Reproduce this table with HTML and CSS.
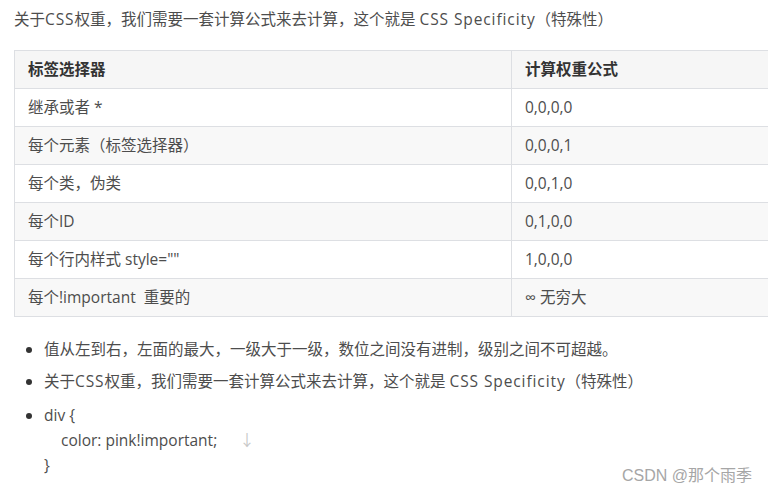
FILE: index.html
```html
<!DOCTYPE html>
<html lang="zh-CN">
<head>
<meta charset="utf-8">
<link rel="stylesheet" href="styles.css">
</head>
<body>
<div class="article">
  <p class="intro">关于<span class="lt">CSS</span>权重，我们需要一套计算公式来去计算，这个就是 <span class="lt">CSS Specificity</span>（特殊性）</p>
  <table class="spec">
    <thead>
      <tr><th class="c1">标签选择器</th><th>计算权重公式</th></tr>
    </thead>
    <tbody>
      <tr><td>继承或者 *</td><td>0,0,0,0</td></tr>
      <tr><td>每个元素（标签选择器）</td><td>0,0,0,1</td></tr>
      <tr><td>每个类，伪类</td><td>0,0,1,0</td></tr>
      <tr><td>每个ID</td><td>0,1,0,0</td></tr>
      <tr><td>每个行内样式 style=""</td><td>1,0,0,0</td></tr>
      <tr><td>每个!important&nbsp; 重要的</td><td>∞ 无穷大</td></tr>
    </tbody>
  </table>
  <ul class="notes">
    <li>值从左到右，左面的最大，一级大于一级，数位之间没有进制，级别之间不可超越。</li>
    <li>关于<span class="lt">CSS</span>权重，我们需要一套计算公式来去计算，这个就是 <span class="lt">CSS Specificity</span>（特殊性）</li>
    <li class="code">div {<br><span class="indent">color: pink!important;</span><span class="arrow">↓</span><br>}</li>
  </ul>
</div>
<div class="watermark">CSDN @那个雨季</div>
</body>
</html>
```

FILE: styles.css
```css
html, body {
  margin: 0;
  padding: 0;
  background: #fff;
  overflow: hidden;
}
body {
  width: 768px;
  height: 492px;
  position: relative;
  font-family: "Open Sans", "Noto Sans CJK SC", sans-serif;
  font-size: 15.5px;
  color: #4d4d4d;
}
.lt {
  letter-spacing: 0.9px;
}
.article {
  padding: 8px 0 0 14px;
}
.intro {
  margin: 0 0 20px 0;
  line-height: 22px;
}
.spec {
  border-collapse: collapse;
  width: 780px;
  table-layout: fixed;
}
.spec th, .spec td {
  border: 1px solid #dddfe3;
  padding: 8px 13px;
  line-height: 21px;
  text-align: left;
}
.spec th {
  background: #f6f6f6;
  color: #333;
  font-weight: bold;
}
.spec th.c1 {
  width: 470px;
}
.spec tbody tr:nth-child(even) td {
  background: #f8f8f8;
}
.notes {
  margin: 20px 0 0 0;
  padding-left: 30px;
}
.notes li {
  line-height: 24px;
  margin-bottom: 8px;
}
.notes li.code {
  line-height: 25px;
  margin-top: 10px;
}
.notes li::marker {
  color: #333;
}
.indent {
  padding-left: 17px;
}
.arrow {
  color: #c8c8c8;
  margin-left: 22px;
}
.watermark {
  position: absolute;
  right: 16px;
  top: 462px;
  font-family: "Liberation Sans", "Noto Sans CJK SC", sans-serif;
  font-size: 16px;
  color: #a6a6a6;
}
```
